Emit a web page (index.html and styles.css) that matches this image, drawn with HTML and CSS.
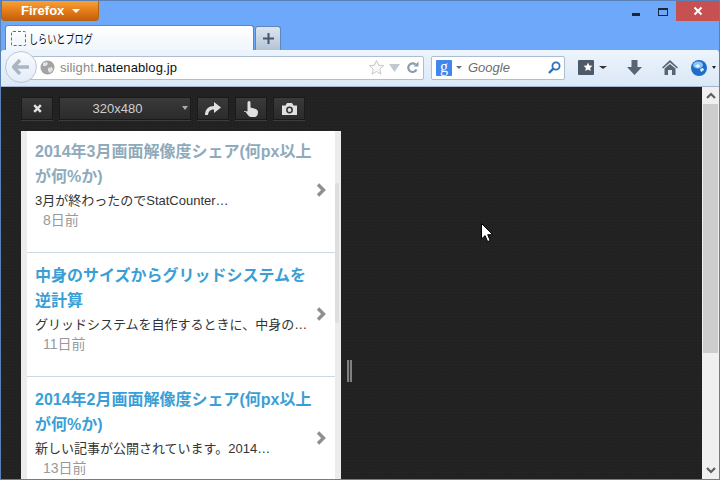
FILE: index.html
```html
<!DOCTYPE html>
<html lang="ja">
<head>
  <meta charset="UTF-8" />
  <title>しらいとブログ</title>
  <link rel="stylesheet" href="styles.css">
</head>
<body>
  <div class="window">
    <div class="titlebar">
      <div class="firefox-btn">Firefox<span class="caret caret-white"></span></div>
      <div class="win-controls">
        <span class="win-min"></span>
        <span class="win-max"></span>
        <span class="win-close">
          <svg width="10" height="10" viewBox="0 0 10 10"><path d="M1.5 1.5l7 7M8.5 1.5l-7 7" stroke="#fff" stroke-width="2"/></svg>
        </span>
      </div>
    </div>

    <div class="tabstrip">
      <div class="tab">
        <span class="favicon"></span>
        <span class="tab-title">しらいとブログ</span>
      </div>
      <div class="newtab">
        <svg width="11" height="11" viewBox="0 0 11 11"><path d="M5.5 0v11M0 5.5h11" stroke="#46566a" stroke-width="2"/></svg>
      </div>
    </div>

    <div class="toolbar">
      <div class="back">
        <svg width="18" height="16" viewBox="0 0 18 16"><path d="M8 1L1.5 8 8 15M2 8h15" fill="none" stroke="#a9b6c4" stroke-width="3.4"/></svg>
      </div>
      <div class="urlbar">
        <svg class="globe-gray" width="15" height="15" viewBox="0 0 15 15">
          <circle cx="7.5" cy="7.5" r="7" fill="#a3a3a3"/>
          <path d="M3 3l4-1 1 2-2 2-3 0zM8 8l4-1 1 3-3 3-2-2z" fill="#e2e2e2"/>
        </svg>
        <span class="url"><span class="url-sub">silight.</span>hatenablog.jp</span>
        <svg class="url-star" width="17" height="17" viewBox="0 0 17 17"><path d="M8.5 1.5l2.1 4.7 5 .5-3.8 3.4 1.1 5-4.400-2.600-4.400 2.600 1.100-5L1.400 6.700l5-.5z" fill="#fafafa" stroke="#c4c8cc"/></svg>
        <svg class="url-drop" width="11" height="8" viewBox="0 0 11 8"><path d="M0 0h11L5.5 8z" fill="#c2c8cf"/></svg>
        <svg class="url-reload" width="13" height="13" viewBox="0 0 13 13"><path d="M10.5 8.5A4.3 4.3 0 1 1 9.500 3.500" fill="none" stroke="#8b9cae" stroke-width="2.2"/><path d="M7.500 5.500L12.500 5.500 12.500 .5z" fill="#8b9cae"/></svg>
      </div>
      <div class="searchbar">
        <span class="engine">g</span>
        <span class="caret caret-small"></span>
        <span class="search-label">Google</span>
        <svg width="13" height="13" viewBox="0 0 13 13"><circle cx="8" cy="5" r="3.6" fill="none" stroke="#2f73b5" stroke-width="1.8"/><path d="M5.3 7.7L1 12" stroke="#2f73b5" stroke-width="2.4"/></svg>
      </div>
      <div class="tool-icons">
        <div class="bookmarks">
          <svg width="16" height="15" viewBox="0 0 16 15">
            <rect width="16" height="15" rx="1" fill="#4d5a68"/>
            <path d="M10 2.5l1.3 3 3.2.3-2.400 2.100.7 3.200-2.800-1.700-2.800 1.700.7-3.200-2.400-2.100 3.200-.3z" fill="#fff"/>
          </svg>
          <span class="caret caret-dark"></span>
        </div>
        <svg class="tool-down" width="15" height="15" viewBox="0 0 15 15"><path d="M4.5 0h6v7h4.5L7.5 15 0 7h4.5z" fill="#566473"/></svg>
        <svg class="tool-home" width="16" height="15" viewBox="0 0 16 15"><path d="M8 0L0 7.5 1 8.5 8 2.5l7 6 1-1z" fill="#566473"/><path d="M2.5 8.500L8 4l5.500 4.500V15H10V10H6v5H2.500z" fill="#566473"/></svg>
        <svg class="tool-globe" width="16" height="16" viewBox="0 0 16 16">
          <circle cx="8" cy="8" r="8" fill="#1d6ecb"/>
          <ellipse cx="7" cy="5" rx="5" ry="3.5" fill="#8cc4f2"/>
          <path d="M4 6l3-2 2 2-2 2zM9 9l3-1 1 2-3 2z" fill="#e4f2fd"/>
        </svg>
        <span class="caret caret-tiny"></span>
      </div>
    </div>

    <div class="content">
      <div class="stage">
        <div class="rdm-bar">
          <button class="rdm-btn">
            <svg width="9" height="9" viewBox="0 0 9 9"><path d="M1.2 1.2l6.6 6.6M7.8 1.2L1.2 7.8" stroke="#e4e4e4" stroke-width="2.4"/></svg>
          </button>
          <button class="rdm-btn rdm-select">320x480<span class="caret caret-gray"></span></button>
          <button class="rdm-btn">
            <svg width="16" height="13" viewBox="0 0 16 13"><path d="M0 13C0 7 4 4 9 4V0l7 5.5-7 5.5V7.500C5.500 7.500 3.500 9 3 13z" fill="#e0e0e0"/></svg>
          </button>
          <button class="rdm-btn">
            <svg width="14" height="16" viewBox="0 0 14 16"><path d="M3.5 1.5a1.5 1.5 0 0 1 3 0V6.5l4.500 1.200c1.800.5 3 1.600 3 3.300 0 2.500-1 5-3.500 5H7c-1.500 0-2.500-1-3.500-2.500L2 11.500c-.5-1 .5-1.800 1.500-1z" fill="#e0e0e0"/><path d="M0 10h2v1H0z" fill="#bbb"/></svg>
          </button>
          <button class="rdm-btn">
            <svg width="15" height="12" viewBox="0 0 15 12"><path d="M0 2.5h3.5L5 0h5l1.500 2.500H15V12H0z" fill="#e0e0e0"/><circle cx="7.5" cy="7" r="3.4" fill="#333"/><circle cx="7.5" cy="7" r="1.9" fill="#e0e0e0"/></svg>
          </button>
        </div>

        <div class="viewport">
          <div class="page">
            <div class="post post-visited">
              <div class="post-body">
                <div class="post-title">2014年3月画面解像度シェア(何px以上が何%か)</div>
                <div class="post-desc">3月が終わったのでStatCounter…</div>
                <div class="post-date">8日前</div>
              </div>
              <svg class="chevron" width="10" height="14" viewBox="0 0 10 14"><path d="M2 1.5L7.5 7 2 12.5" fill="none" stroke="#8f8f8f" stroke-width="3.4"/></svg>
            </div>
            <div class="post">
              <div class="post-body">
                <div class="post-title">中身のサイズからグリッドシステムを逆計算</div>
                <div class="post-desc">グリッドシステムを自作するときに、中身の…</div>
                <div class="post-date">11日前</div>
              </div>
              <svg class="chevron" width="10" height="14" viewBox="0 0 10 14"><path d="M2 1.5L7.5 7 2 12.5" fill="none" stroke="#8f8f8f" stroke-width="3.4"/></svg>
            </div>
            <div class="post">
              <div class="post-body">
                <div class="post-title">2014年2月画面解像度シェア(何px以上が何%か)</div>
                <div class="post-desc">新しい記事が公開されています。2014…</div>
                <div class="post-date">13日前</div>
              </div>
              <svg class="chevron" width="10" height="14" viewBox="0 0 10 14"><path d="M2 1.5L7.5 7 2 12.5" fill="none" stroke="#8f8f8f" stroke-width="3.4"/></svg>
            </div>
          </div>
          <div class="page-scroll"><span class="page-thumb"></span></div>
        </div>

        <div class="resize-grip"></div>

        <svg class="cursor" width="13" height="20" viewBox="0 0 13 20"><path d="M.5.5V16l3.6-3.4 2.5 6 2.6-1.100-2.500-5.800h5z" fill="#fff" stroke="#000"/></svg>
      </div>

      <div class="scrollbar">
        <div class="scroll-btn">
          <svg width="10" height="7" viewBox="0 0 10 7"><path d="M1 6l4-4 4 4" fill="none" stroke="#606060" stroke-width="2.2"/></svg>
        </div>
        <div class="scroll-thumb"></div>
        <div class="scroll-track"></div>
        <div class="scroll-btn">
          <svg width="10" height="7" viewBox="0 0 10 7"><path d="M1 1l4 4 4-4" fill="none" stroke="#606060" stroke-width="2.2"/></svg>
        </div>
      </div>
    </div>
  </div>
</body>
</html>
```

FILE: styles.css
```css
html, body {
  margin: 0;
  padding: 0;
  height: 100%;
  overflow: hidden;
}
body {
  font-family: "Liberation Sans", "Noto Sans CJK JP", sans-serif;
}
.window {
  width: 720px;
  height: 480px;
  box-sizing: border-box;
  display: flex;
  flex-direction: column;
  background-color: #6ea8fb;
  border: 1px solid #5a80b8;
  overflow: hidden;
}

/* carets */
.caret {
  display: inline-block;
  width: 0;
  height: 0;
  border-style: solid;
  border-color: transparent;
  border-bottom-width: 0;
}
.caret-white {
  border-width: 4px 4px 0;
  border-top-color: #fff;
  margin-left: 8px;
  vertical-align: 2px;
}
.caret-small {
  border-width: 3px 3px 0;
  border-top-color: #66727f;
}
.caret-dark {
  border-width: 3px 4px 0;
  border-top-color: #333;
}
.caret-tiny {
  border-width: 3px 2px 0;
  border-top-color: #222;
  margin-left: 5px;
}
.caret-gray {
  position: absolute;
  right: 2px;
  top: 8px;
  border-width: 4px 3px 0;
  border-top-color: #aaa;
}

/* title bar */
.titlebar {
  height: 24px;
  display: flex;
  justify-content: space-between;
  flex: none;
}
.firefox-btn {
  width: 98px;
  height: 20px;
  box-sizing: border-box;
  padding-left: 19px;
  background: linear-gradient(#f7a23a, #e8801c 45%, #c75f0c);
  border: 1px solid #b3640f;
  border-top: none;
  border-radius: 0 0 4px 4px;
  color: #fff;
  font-weight: bold;
  font-size: 13px;
  line-height: 20px;
}
.win-controls {
  display: flex;
}
.win-min {
  width: 8px;
  height: 3px;
  margin: 12px 0 0 0;
  background-color: #1c2733;
}
.win-max {
  width: 8px;
  height: 5px;
  margin: 7px 0 0 18px;
  border: 1px solid #1c2733;
  border-top-width: 2px;
}
.win-close {
  width: 43px;
  height: 20px;
  margin-left: 8px;
  display: flex;
  align-items: center;
  justify-content: center;
  background-color: #c75050;
}

/* tabs */
.tabstrip {
  height: 25px;
  flex: none;
  display: flex;
  padding-left: 4px;
  align-items: flex-end;
}
.tab {
  width: 249px;
  height: 25px;
  box-sizing: border-box;
  display: flex;
  align-items: center;
  padding: 0 0 0 5px;
  background: linear-gradient(#fff, #f0f6fc);
  border: 1px solid #5f86b8;
  border-bottom: none;
  border-radius: 3px 3px 0 0;
}
.favicon {
  width: 13px;
  height: 13px;
  border: 1px dashed #6b6b6b;
  border-radius: 2px;
  margin-right: 3px;
}
.tab-title {
  display: inline-block;
  font-size: 12px;
  color: #111;
  transform: scaleX(0.76);
  transform-origin: left center;
}
.newtab {
  width: 26px;
  height: 24px;
  margin-left: 1px;
  box-sizing: border-box;
  display: flex;
  align-items: center;
  justify-content: center;
  background: linear-gradient(#dde6f0, #b4c3d4);
  border: 1px solid #5f86b8;
  border-bottom: none;
  border-radius: 3px 3px 0 0;
}

/* nav toolbar */
.toolbar {
  height: 37px;
  flex: none;
  box-sizing: border-box;
  display: flex;
  align-items: center;
  position: relative;
  padding: 0 0 1px 19px;
  background: linear-gradient(#edf4fc, #dbe8f7);
  border-bottom: 1px solid #a4b5cb;
  border-radius: 3px 3px 0 0;
}
.back {
  position: absolute;
  left: 4px;
  top: 1px;
  width: 32px;
  height: 32px;
  display: flex;
  align-items: center;
  justify-content: center;
  box-sizing: border-box;
  background: linear-gradient(#f8fbfe, #e3ecf6);
  border: 1px solid #b9c8da;
  border-radius: 50%;
  z-index: 1;
}
.urlbar {
  width: 404px;
  height: 24px;
  box-sizing: border-box;
  display: flex;
  align-items: center;
  padding: 0 4px 0 19px;
  background-color: #fff;
  border: 1px solid #aebdd0;
  border-radius: 0 2px 2px 0;
}
.globe-gray {
  margin-right: 5px;
}
.url {
  flex: 1;
  font-size: 13px;
  letter-spacing: 0.1px;
  color: #111;
}
.url-sub {
  color: #8a8a8a;
}
.url-star {
  margin-right: 4px;
}
.url-drop {
  margin-right: 6px;
}
.searchbar {
  width: 134px;
  height: 24px;
  margin-left: 7px;
  box-sizing: border-box;
  display: flex;
  align-items: center;
  padding: 0 3px 0 4px;
  background-color: #fff;
  border: 1px solid #aebdd0;
  border-radius: 2px;
}
.engine {
  width: 16px;
  height: 16px;
  background-color: #3f86ee;
  color: #fff;
  border-radius: 1px;
  font-family: "Liberation Serif", serif;
  font-size: 16px;
  line-height: 13px;
  text-align: center;
  margin-right: 4px;
}
.search-label {
  flex: 1;
  margin-left: 6px;
  font-size: 13px;
  font-style: italic;
  color: #6d6d6d;
}
.tool-icons {
  display: flex;
  align-items: center;
  margin-left: 13px;
}
.bookmarks {
  display: flex;
  align-items: center;
  gap: 5px;
}
.tool-down {
  margin-left: 20px;
}
.tool-home {
  margin-left: 20px;
}
.tool-globe {
  margin-left: 13px;
}

/* content */
.content {
  flex: 1;
  display: flex;
  min-height: 0;
}
.stage {
  flex: 1;
  position: relative;
  min-width: 0;
  box-sizing: border-box;
  padding: 10px 0 0 20px;
  display: flex;
  flex-direction: column;
  gap: 11px;
  background-color: #222;
  background-image:
    radial-gradient(#262626 0.6px, transparent 1px),
    radial-gradient(#1f1f1f 0.6px, transparent 1px);
  background-size: 3px 3px;
  background-position: 0 0, 1px 2px;
}
.rdm-bar {
  display: flex;
  gap: 6px;
  height: 23px;
  flex: none;
}
.rdm-btn {
  width: 32px;
  height: 23px;
  box-sizing: border-box;
  padding: 0;
  display: flex;
  align-items: center;
  justify-content: center;
  position: relative;
  background: linear-gradient(#3a3a3a, #2b2b2b);
  border: 1px solid #1a1a1a;
  box-shadow: 0 1px 0 #3c3c3c;
  color: #cfcfcf;
  font-family: "Liberation Sans", sans-serif;
  font-size: 13px;
}
.rdm-select {
  width: 132px;
  padding-right: 15px;
}
.viewport {
  width: 320px;
  flex: 1;
  min-height: 0;
  display: flex;
  overflow: hidden;
  background-color: #ececec;
  padding-left: 6px;
  box-sizing: border-box;
}
.page {
  width: 308px;
  flex: none;
  margin-top: -2px;
  background-color: #fff;
}
.post {
  height: 124px;
  box-sizing: border-box;
  display: flex;
  align-items: center;
  padding: 11px 9px 0 8px;
  border-bottom: 1px solid #d0d8e2;
}
.post-body {
  flex: 1;
  min-width: 0;
  align-self: flex-start;
}
.post-title {
  font-size: 16px;
  font-weight: bold;
  line-height: 24.5px;
  color: #3a9fd6;
}
.post-visited .post-title {
  color: #8eaabb;
}
.post-desc {
  margin-top: 2px;
  font-size: 13px;
  line-height: 19px;
  color: #333;
  white-space: nowrap;
}
.post-date {
  font-size: 14px;
  line-height: 20px;
  color: #999;
  padding-left: 8px;
}
.chevron {
  flex: none;
  margin: 0 0 13px 1px;
}
.page-scroll {
  width: 6px;
  flex: none;
}
.page-thumb {
  display: block;
  width: 4px;
  height: 140px;
  margin-top: 52px;
  background-color: #dedede;
  border-radius: 2px;
}
.resize-grip {
  position: absolute;
  left: 346px;
  top: 273px;
  width: 1px;
  height: 22px;
  background-color: #333;
  border: 2px solid #808080;
  border-top: none;
  border-bottom: none;
}
.cursor {
  position: absolute;
  left: 480px;
  top: 136px;
}

/* page scrollbar */
.scrollbar {
  width: 17px;
  flex: none;
  display: flex;
  flex-direction: column;
  background-color: #f0f0f0;
}
.scroll-btn {
  height: 17px;
  flex: none;
  display: flex;
  align-items: center;
  justify-content: center;
}
.scroll-thumb {
  height: 249px;
  margin: 0 1px;
  background-color: #cdcdcd;
}
.scroll-track {
  flex: 1;
}
```
